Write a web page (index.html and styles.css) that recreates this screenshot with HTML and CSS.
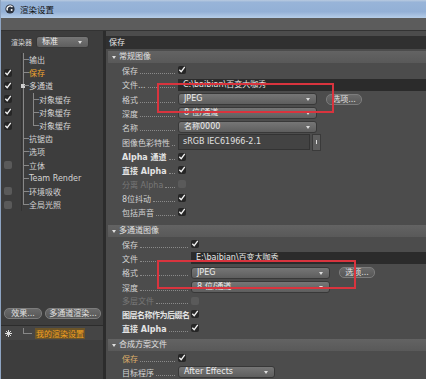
FILE: index.html
```html
<!DOCTYPE html>
<html lang="zh">
<head>
  <meta charset="UTF-8" />
  <title>渲染设置</title>
  <link rel="stylesheet" href="styles.css">
</head>
<body>
  <div class="window">

    <!-- title bar -->
    <div class="titlebar">
      <svg class="logo" width="10" height="10" viewBox="0 0 10 10">
        <circle cx="5" cy="5" r="4.6" fill="#2d3440"/>
        <path d="M2.5 6.5 A3 3 0 0 1 7.5 3.2" stroke="#fff" stroke-width="1.3" fill="none"/>
        <circle cx="6.6" cy="6" r="1" fill="#fff"/>
      </svg>
      <span>渲染设置</span>
    </div>
    <div class="menubar"></div>

    <div class="main">
      <!-- left: renderer + tree -->
      <div class="sidebar">
        <div class="renderer">
          <span class="renderer-label">渲染器</span>
          <div class="select small">标准<i class="arrow"></i></div>
        </div>

        <div class="tree">
          <div class="node"><span class="box"></span><span class="twig"></span><span>输出</span></div>
          <div class="node"><span class="box"><span class="chk"><svg viewBox="0 0 9 9"><path d="M1.5 4.8 L3.6 7 L7.6 1.6"/></svg></span></span><span class="twig"></span><span class="active">保存</span></div>
          <div class="node"><span class="box"><span class="chk"><svg viewBox="0 0 9 9"><path d="M1.5 4.8 L3.6 7 L7.6 1.6"/></svg></span></span><span class="twig open"></span><span>多通道</span></div>
          <div class="node child"><span class="box"><span class="chk"><svg viewBox="0 0 9 9"><path d="M1.5 4.8 L3.6 7 L7.6 1.6"/></svg></span></span><span class="pass"></span><span class="twig"></span><span>对象缓存</span></div>
          <div class="node child"><span class="box"><span class="chk"><svg viewBox="0 0 9 9"><path d="M1.5 4.8 L3.6 7 L7.6 1.6"/></svg></span></span><span class="pass"></span><span class="twig"></span><span>对象缓存</span></div>
          <div class="node child"><span class="box"><span class="chk"><svg viewBox="0 0 9 9"><path d="M1.5 4.8 L3.6 7 L7.6 1.6"/></svg></span></span><span class="pass"></span><span class="twig last"></span><span>对象缓存</span></div>
          <div class="node"><span class="box"></span><span class="twig"></span><span>抗锯齿</span></div>
          <div class="node"><span class="box"></span><span class="twig"></span><span>选项</span></div>
          <div class="node"><span class="box"><span class="chk off"></span></span><span class="twig"></span><span>立体</span></div>
          <div class="node"><span class="box"></span><span class="twig"></span><span>Team Render</span></div>
          <div class="node"><span class="box"><span class="chk off"></span></span><span class="twig"></span><span>环境吸收</span></div>
          <div class="node"><span class="box"><span class="chk off"></span></span><span class="twig last"></span><span>全局光照</span></div>
        </div>

        <div class="side-buttons">
          <div class="pill">效果...</div>
          <div class="pill wide">多通道渲染...</div>
        </div>
        <div class="presets">
          <div class="preset">
            <svg width="7" height="7" viewBox="0 0 7 7"><path d="M3.5 0 V7 M0 3.5 H7 M1 1 L6 6 M6 1 L1 6" stroke="#ddd" stroke-width="1"/></svg>
            <span class="twig-h"></span>
            <span class="preset-name">我的渲染设置</span>
          </div>
        </div>
      </div>

      <div class="divider"></div>

      <!-- right: attributes -->
      <div class="content">
        <div class="pane-head">保存</div>

        <div class="group">
          <div class="group-head"><i class="tri"></i>常规图像</div>
          <div class="row"><span class="label">保存<b class="dots"></b></span><span class="chk"><svg viewBox="0 0 9 9"><path d="M1.5 4.8 L3.6 7 L7.6 1.6"/></svg></span></div>
          <div class="row r15"><span class="label">文件...<b class="dots"></b></span><div class="path">C:\baibian\百变大咖秀</div></div>
          <div class="row"><span class="label">格式<b class="dots"></b></span><div class="select">JPEG<i class="arrow"></i></div><div class="pill opt">选项...</div></div>
          <div class="row"><span class="label">深度<b class="dots"></b></span><div class="select">8 位/通道<i class="arrow"></i></div></div>
          <div class="row"><span class="label">名称<b class="dots"></b></span><div class="select">名称0000<i class="arrow"></i></div></div>
          <div class="row r16"><span class="label">图像色彩特性<b class="dots"></b></span><div class="profile">sRGB IEC61966-2.1</div><div class="spin"><i></i></div></div>
          <div class="row r13"><span class="label strong">Alpha 通道<b class="dots"></b></span><span class="chk"><svg viewBox="0 0 9 9"><path d="M1.5 4.8 L3.6 7 L7.6 1.6"/></svg></span></div>
          <div class="row"><span class="label strong">直接 Alpha<b class="dots"></b></span><span class="chk"><svg viewBox="0 0 9 9"><path d="M1.5 4.8 L3.6 7 L7.6 1.6"/></svg></span></div>
          <div class="row"><span class="label dim">分离 Alpha<b class="dots"></b></span><span class="chk off"></span></div>
          <div class="row"><span class="label">8位抖动<b class="dots"></b></span><span class="chk"><svg viewBox="0 0 9 9"><path d="M1.5 4.8 L3.6 7 L7.6 1.6"/></svg></span></div>
          <div class="row"><span class="label">包括声音<b class="dots"></b></span><span class="chk"><svg viewBox="0 0 9 9"><path d="M1.5 4.8 L3.6 7 L7.6 1.6"/></svg></span></div>
        </div>

        <div class="group multi">
          <div class="group-head"><i class="tri"></i>多通道图像</div>
          <div class="row"><span class="label">保存<b class="dots"></b></span><span class="chk"><svg viewBox="0 0 9 9"><path d="M1.5 4.8 L3.6 7 L7.6 1.6"/></svg></span></div>
          <div class="row"><span class="label">文件<b class="dots"></b></span><div class="path">E:\baibian\百变大咖秀</div></div>
          <div class="row r15"><span class="label">格式<b class="dots"></b></span><div class="select">JPEG<i class="arrow"></i></div><div class="pill opt">选项...</div></div>
          <div class="row"><span class="label">深度<b class="dots"></b></span><div class="select">8 位/通道<i class="arrow"></i></div></div>
          <div class="row r13"><span class="label dim">多层文件<b class="dots"></b></span><span class="chk off"></span></div>
          <div class="row"><span class="label strong tight">图层名称作为后缀名</span><span class="chk"><svg viewBox="0 0 9 9"><path d="M1.5 4.8 L3.6 7 L7.6 1.6"/></svg></span></div>
          <div class="row"><span class="label strong">直接 Alpha<b class="dots"></b></span><span class="chk"><svg viewBox="0 0 9 9"><path d="M1.5 4.8 L3.6 7 L7.6 1.6"/></svg></span></div>
        </div>

        <div class="group comp">
          <div class="group-head"><i class="tri"></i>合成方案文件</div>
          <div class="row"><span class="label hot">保存<b class="dots"></b></span><span class="chk"><svg viewBox="0 0 9 9"><path d="M1.5 4.8 L3.6 7 L7.6 1.6"/></svg></span></div>
          <div class="row"><span class="label">目标程序<b class="dots"></b></span><div class="select app">After Effects<i class="arrow"></i></div></div>
        </div>
      </div>
    </div>

    <!-- red annotation boxes drawn over the dialog -->
    <div class="mark mark-1"></div>
    <div class="mark mark-2"></div>
  </div>
</body>
</html>
```

FILE: styles.css
```css
body {
  margin: 0;
  background: #4a4a4a;
  font-family: "DejaVu Sans", "Noto Sans CJK SC", sans-serif;
  font-size: 8px;
  color: #d4d4d4;
  overflow: hidden;
}

.window {
  position: relative;
  width: 426px;
  height: 379px;
  display: flex;
  flex-direction: column;
  border-left: 1px solid #8ea4c2;
  box-sizing: border-box;
}

/* title bar */
.titlebar {
  height: 18px;
  display: flex;
  align-items: center;
  gap: 5px;
  padding-left: 4px;
  background: linear-gradient(#b9cbe0 0, #98b4d8 12%, #93b0d6 65%, #b6cde8 100%);
  color: #111;
  font-size: 8.5px;
}

.menubar {
  height: 12px;
  background: #5c5c5c;
  border-bottom: 1px solid #333;
}

.main {
  flex: 1;
  display: flex;
  min-height: 0;
}

/* left side */
.sidebar {
  width: 102px;
  background: #3d3d3d;
  display: flex;
  flex-direction: column;
}

.renderer {
  display: flex;
  align-items: center;
  gap: 4px;
  padding: 4px 0 0 10px;
  height: 13px;
}

.renderer-label {
  font-size: 7px;
}

.select {
  position: relative;
  width: 132px;
  height: 10px;
  padding-left: 5px;
  line-height: 10px;
  background: linear-gradient(#767676, #5e5e5e);
  border: 1px solid #383838;
  border-radius: 3px;
  color: #eee;
}

.select.small { width: 46px; }
.select.app { width: 90px; }

.arrow {
  position: absolute;
  right: 6px;
  top: 4px;
  border-left: 2.5px solid transparent;
  border-right: 2.5px solid transparent;
  border-top: 3px solid #ddd;
}

.tree {
  margin-top: 5px;
}

.node {
  display: flex;
  align-items: center;
  height: 13.2px;
}

.box {
  width: 21px;
  height: 100%;
  display: flex;
  align-items: center;
  padding-left: 3px;
  box-sizing: border-box;
  border-right: 1px solid #333;
}

.twig {
  position: relative;
  width: 6px;
  height: 100%;
  margin-left: 1px;
  border-left: 1px solid #888;
  box-sizing: border-box;
}

.twig::after {
  content: "";
  position: absolute;
  left: 0;
  top: 6px;
  width: 5px;
  border-top: 1px solid #888;
}

.twig.last {
  height: 50%;
  align-self: flex-start;
}

.twig.last::after { top: auto; bottom: 0; }

.twig.open::before {
  content: "";
  position: absolute;
  left: -3px;
  top: 5px;
  width: 4px;
  height: 4px;
  background: #cfcfcf;
}

.pass {
  width: 10px;
  height: 100%;
  margin-left: 1px;
  border-left: 1px solid #888;
  box-sizing: border-box;
}

.node.child .twig { margin-left: 0; }

.active { color: #f0a530; }

.chk {
  width: 8px;
  height: 8px;
  flex: none;
  background: #262626;
  border-radius: 2px;
  display: inline-flex;
}

.chk svg {
  width: 9px;
  height: 9px;
  margin: -1px 0 0 0;
}

.chk svg path {
  fill: none;
  stroke: #f2f2f2;
  stroke-width: 1.5;
}

.chk.off {
  background: #5a5a5a;
}

.side-buttons {
  margin-top: auto;
  display: flex;
  gap: 3px;
  padding: 0 0 0 3px;
}

.pill {
  height: 9px;
  line-height: 9px;
  padding: 0 3px;
  background: linear-gradient(#6a6a6a, #575757);
  border: 1px solid #7c7c7c;
  border-radius: 5px;
  color: #e2e2e2;
  text-align: center;
}

.side-buttons .pill { width: 30px; }
.side-buttons .pill.wide { width: 48px; }

.presets {
  height: 53px;
  margin-top: 6px;
  border-top: 1px solid #2c2c2c;
}

.preset {
  display: flex;
  align-items: center;
  gap: 3px;
  height: 14px;
  padding-left: 4px;
  background: #454545;
}

.twig-h {
  width: 8px;
  height: 5px;
  border-left: 1px solid #888;
  border-bottom: 1px solid #888;
  margin-top: -4px;
  margin-left: 8px;
}

.preset-name {
  color: #f0a020;
  background: #6b5428;
  padding: 0 1px;
}

.divider {
  width: 3px;
  background: #2c2c2c;
}

/* right side */
.content {
  flex: 1;
  background: #4c4c4c;
}

.pane-head {
  height: 13px;
  line-height: 13px;
  margin-top: 5px;
  padding-left: 3px;
  background: #303030;
  color: #e6e6e6;
}

.group {
  margin-left: 2px;
}

.group.multi { margin-top: 6px; }
.group.comp { margin-top: 4px; }

.group-head {
  height: 12px;
  line-height: 12px;
  margin-top: 2px;
  padding-left: 4px;
  background: linear-gradient(#636363, #595959);
  color: #e0e0e0;
  display: flex;
  align-items: center;
  gap: 3px;
}

.tri {
  border-left: 2.5px solid transparent;
  border-right: 2.5px solid transparent;
  border-top: 3px solid #e0e0e0;
}

.row {
  display: flex;
  align-items: center;
  height: 14px;
  padding-left: 14px;
}

.row.r13 { height: 13px; }
.row.r15 { height: 15px; }
.row.r16 { height: 16px; }

.label {
  width: 56px;
  display: flex;
  align-items: baseline;
  white-space: nowrap;
}

.group.multi .label { width: 69px; }

.label.tight { letter-spacing: -0.5px; }

.dots {
  flex: 1;
  margin: 0 3px 0 2px;
  border-bottom: 1px dotted #8a8a8a;
}

.strong { font-weight: bold; color: #e4e4e4; }
.dim { color: #777; }
.hot { color: #dcae6a; }

.path {
  flex: 1;
  height: 12px;
  line-height: 12px;
  padding-left: 5px;
  background: #2b2b2b;
  color: #e8e8e8;
}

.opt {
  width: 28px;
  margin-left: 9px;
}

.profile {
  width: 126px;
  height: 14px;
  line-height: 14px;
  padding-left: 4px;
  background: #434343;
  border: 1px solid #333;
  color: #e0e0e0;
}

.spin {
  width: 7px;
  height: 15px;
  margin-left: 2px;
  background: #5e5e5e;
  border: 1px solid #3a3a3a;
  display: flex;
  align-items: center;
  justify-content: center;
}

.spin i {
  width: 1px;
  height: 4px;
  background: #ddd;
}

/* red annotation marks */
.mark {
  position: absolute;
  border: 2px solid #d9343e;
  box-sizing: border-box;
}

.mark-1 { left: 156px; top: 83px; width: 177px; height: 30px; }
.mark-2 { left: 156px; top: 260px; width: 199px; height: 29px; }
```
